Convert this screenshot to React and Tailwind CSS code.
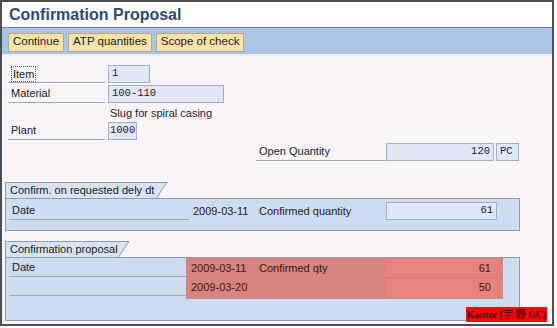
import React from 'react';

const sans = "font-['Liberation_Sans',Arial,sans-serif]";
const mono = "font-['Liberation_Mono','Courier_New',monospace]";

const Field = ({ value, width, right, tight }) => (
  <div
    className={`h-[18px] ${width} bg-[#dfe8f7] border border-[#a4aebf] ${mono} text-[10.5px] text-[#222] ${
      tight ? 'px-[1px]' : 'px-[3px]'
    } flex items-center whitespace-nowrap ${right ? 'justify-end' : ''}`}
  >
    {value}
  </div>
);

const Label = ({ children, width, focus }) => (
  <div className={`h-[18px] ${width} border-b border-[#9ea6b4] flex items-center pl-[3px] text-[#222] whitespace-nowrap`}>
    {focus ? <span className="border border-dotted border-[#555] px-[1px] leading-[14px]">{children}</span> : children}
  </div>
);

const GroupHeader = ({ title, width }) => (
  <div className="flex h-[16px]">
    <div className={`${width} h-[16px] bg-[#d8e2f1] border-t border-l border-[#8f9db2] pl-[4px] flex items-center text-[#222] whitespace-nowrap`}>
      {title}
    </div>
    <svg width="12" height="16" viewBox="0 0 12 16">
      <polygon points="0,0 11,0 0,16" fill="#d8e2f1" />
      <line x1="0" y1="0.5" x2="11" y2="0.5" stroke="#8f9db2" />
      <line x1="11" y1="0.5" x2="0.5" y2="16" stroke="#8f9db2" />
    </svg>
  </div>
);

export default function App() {
  return (
    <div className={`w-[557px] h-[328px] bg-white ${sans} text-[11px] relative`}>
      <div className="w-[554px] h-[326px] border-2 border-[#4b4f55] flex flex-col bg-[#f8f4f8]">
        {/* title */}
        <div className="h-[26px] bg-white border-b border-[#6d7d91] flex items-center pl-[7px]">
          <span className="text-[16px] font-bold text-[#2d4b6f]">Confirmation Proposal</span>
        </div>

        {/* toolbar */}
        <div className="h-[26px] bg-[#a9c4e6] flex items-center gap-[4px] pl-[6px] pt-[2px]">
          {['Continue', 'ATP quantities', 'Scope of check'].map((b) => (
            <div
              key={b}
              className="h-[19px] px-[4px] bg-[#f6e2aa] border border-[#bfa972] flex items-center text-[#222] text-[11.5px]"
            >
              {b}
            </div>
          ))}
        </div>
        <div className="h-[2px] bg-[#e9eef7]" />

        {/* body */}
        <div className="flex-1 flex flex-col pt-[9px]">
          <div className="flex items-center gap-[3px] pl-[6px]">
            <Label width="w-[97px]" focus>Item</Label>
            <Field value="1" width="w-[42px]" />
          </div>
          <div className="flex items-center gap-[3px] pl-[6px] mt-[2px]">
            <Label width="w-[97px]">Material</Label>
            <Field value="100-110" width="w-[116px]" />
          </div>
          <div className="h-[18px] flex items-center pl-[108px] text-[#222] mt-[1px]">Slug for spiral casing</div>
          <div className="flex items-center gap-[3px] pl-[6px]">
            <Label width="w-[97px]">Plant</Label>
            <Field value="1000" width="w-[29px]" tight />
          </div>
          <div className="flex items-center pl-[254px] mt-[3px]">
            <Label width="w-[130px]">Open Quantity</Label>
            <Field value="120" width="w-[108px]" right />
            <div className="ml-[2px]">
              <Field value="PC" width="w-[23px]" />
            </div>
          </div>

          {/* group 1 */}
          <div className="ml-[3px] w-[515px] mt-[21px]">
            <GroupHeader title="Confirm. on requested dely dt" width="w-[151px]" />
            <div className="h-[33px] bg-[#cfdbee] border border-[#8f9db2] pt-[3px]">
              <div className="flex items-center pl-[3px]">
                <Label width="w-[180px]">Date</Label>
                <div className="w-[70px] pl-[4px] text-[#222]">2009-03-11</div>
                <div className="w-[127px] text-[#222]">Confirmed quantity</div>
                <Field value="61" width="w-[111px]" right />
              </div>
            </div>
          </div>

          {/* group 2 */}
          <div className="ml-[3px] w-[515px] mt-[10px]">
            <GroupHeader title="Confirmation proposal" width="w-[113px]" />
            <div className="h-[64px] bg-[#cfdbee] border border-[#8f9db2] flex">
              <div className="pl-[3px] pt-[1px] flex flex-col gap-[1px]">
                <Label width="w-[177px]">Date</Label>
                <Label width="w-[177px]">{''}</Label>
              </div>
              <div className="w-[317px] h-[41px] bg-[#d7837f] flex flex-col pt-[1px] text-[#3b1a1a]">
                <div className="flex items-center h-[19px]">
                  <div className="w-[73px] pl-[5px]">2009-03-11</div>
                  <div className="w-[127px]">Confirmed qty</div>
                  <div className="w-[111px] h-[19px] bg-[#e8827f] border-b border-[#c97572] flex items-center justify-end pr-[6px]">
                    61
                  </div>
                </div>
                <div className="flex items-center h-[19px]">
                  <div className="w-[200px] pl-[5px]">2009-03-20</div>
                  <div className="w-[111px] h-[19px] bg-[#e8827f] flex items-center justify-end pr-[6px]">50</div>
                </div>
              </div>
            </div>
          </div>
        </div>
      </div>

      <div className="absolute left-[466px] top-[307px] w-[81px] h-[15px] bg-[#ee0a0a] flex items-center justify-center font-['Liberation_Serif','Noto_Sans_CJK_SC',serif] font-bold text-[10px] text-[#5a0000] leading-none">
        Kanter (宇 野 GC)
      </div>
    </div>
  );
}
